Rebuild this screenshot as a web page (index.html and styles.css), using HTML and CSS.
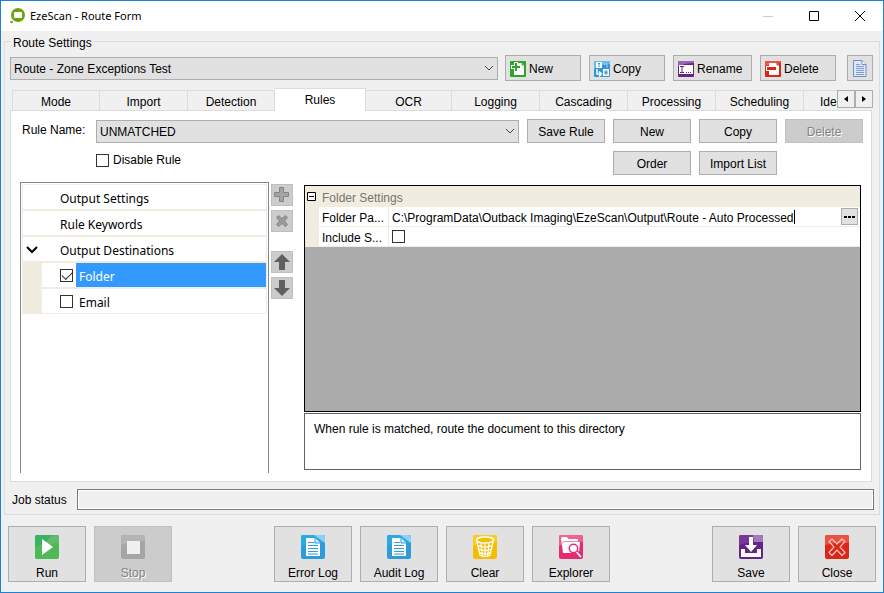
FILE: index.html
```html
<!DOCTYPE html>
<html lang="en">
<head>
    <meta charset="UTF-8">
    <meta name="viewport" content="width=device-width, initial-scale=1.0">
    <title>EzeScan - Route Form</title>
    <link rel="stylesheet" href="styles.css">
</head>
<body>
    <div class="window">
        <header class="titlebar">
            <svg class="app-icon" width="16" height="16" viewBox="0 0 16 16">
                <circle cx="8" cy="7" r="7" fill="#6fa30c"/>
                <rect x="4" y="4" width="8" height="6" rx="1" fill="#fff"/>
                <path d="M0 10.500l3.500 3.500" stroke="#fff" stroke-width="1.500"/>
                <circle cx="1.500" cy="14" r="1.300" fill="#6fa30c"/>
            </svg>
            <h1>EzeScan - Route Form</h1>
            <div class="window-controls">
                <button type="button" aria-label="Minimize" disabled>
                    <svg width="12" height="12" viewBox="0 0 12 12"><path d="M1 6.500h10" stroke="#ccc"/></svg>
                </button>
                <button type="button" aria-label="Maximize">
                    <svg width="12" height="12" viewBox="0 0 12 12"><path d="M1.500 1.500h9v9h-9z" fill="none" stroke="#000"/></svg>
                </button>
                <button type="button" aria-label="Close window">
                    <svg width="12" height="12" viewBox="0 0 12 12"><path d="M1 1l10 10M11 1L1 11" stroke="#000"/></svg>
                </button>
            </div>
        </header>

        <section class="route" aria-labelledby="route-title">
            <h2 id="route-title">Route Settings</h2>

            <div class="route-bar">
                <div class="combo">
                    <select aria-label="Route"><option>Route - Zone Exceptions Test</option></select>
                    <svg class="chevron" width="10" height="6" viewBox="0 0 10 6"><path d="M1 1l4 4 4-4" fill="none" stroke="#444"/></svg>
                </div>
                <div class="route-buttons">
                    <button type="button" class="btn btn-icon">
                        <svg width="16" height="16" viewBox="0 0 16 16">
                            <rect width="16" height="16" rx="1" fill="#2ea526"/>
                            <path d="M5 2h7l2 2v10H4V9z" fill="#fff"/>
                            <path d="M12 1v3h3" fill="none" stroke="#2ea526"/>
                            <path d="M6 1v10M1 6h10" stroke="#fff" stroke-width="4"/>
                            <path d="M6 2v8M2 6h8" stroke="#2ea526" stroke-width="2"/>
                        </svg>
                        New
                    </button>
                    <button type="button" class="btn btn-icon">
                        <svg width="16" height="16" viewBox="0 0 16 16">
                            <rect width="16" height="16" rx="1" fill="#3295d6"/>
                            <path d="M0 0h16v3Q9 3 0 8z" fill="#65bbe9"/>
                            <path d="M2 1h6v6H2zM9 8h6v7H9z" fill="#fff"/>
                            <path d="M4 2.500h2M5 2v4M11 10h2v3h-2zM11 11.500h2" fill="none" stroke="#3295d6"/>
                            <path d="M3 8v5h4M5 10.500L7.500 13 5 15.500" fill="none" stroke="#fff" stroke-width="1.500"/>
                            <path d="M10 3h3v4" fill="none" stroke="#9ed3f2"/>
                        </svg>
                        Copy
                    </button>
                    <button type="button" class="btn btn-icon">
                        <svg width="16" height="16" viewBox="0 0 16 16">
                            <rect width="16" height="16" rx="1" fill="#652386"/>
                            <path d="M0 0h16v2Q8 2 0 5z" fill="#9468ac"/>
                            <rect x="1" y="4" width="14" height="9" fill="#fff"/>
                            <path d="M2 5.500h4M4 5.500v6M2 11.500h4M8 11.500h1M10 11.500h1M12 11.500h1" stroke="#652386"/>
                        </svg>
                        Rename
                    </button>
                    <button type="button" class="btn btn-icon">
                        <svg width="16" height="16" viewBox="0 0 16 16">
                            <rect width="16" height="16" rx="1" fill="#dc2418"/>
                            <path d="M0 0h16v2Q8 2 0 5z" fill="#ea5549"/>
                            <path d="M4 2h8l2 2v10H4z" fill="#fff"/>
                            <path d="M12 1v3h3" fill="none" stroke="#dc2418"/>
                            <rect x="1" y="5" width="11" height="5" fill="#fff"/>
                            <rect x="2" y="6" width="9" height="3" fill="#dc2418"/>
                        </svg>
                        Delete
                    </button>
                </div>
                <button type="button" class="btn btn-square" aria-label="View route document">
                    <svg width="14" height="17" viewBox="0 0 14 17">
                        <path d="M.5.5h8.500l4 4v12H.5z" fill="#dce8fa" stroke="#6f8fc7"/>
                        <path d="M9 .5v4h4" fill="#fff" stroke="#6f8fc7"/>
                        <path d="M3 4.500h4M3 6.500h8M3 8.500h8M3 10.500h8M3 12.500h8M3 14.500h8" stroke="#7f9fd3"/>
                    </svg>
                </button>
            </div>

            <div class="tab-strip">
                <div class="tabs" role="tablist">
                    <button type="button" class="tab" role="tab">Mode</button>
                    <button type="button" class="tab" role="tab">Import</button>
                    <button type="button" class="tab" role="tab">Detection</button>
                    <button type="button" class="tab active" role="tab" aria-selected="true">Rules</button>
                    <button type="button" class="tab" role="tab">OCR</button>
                    <button type="button" class="tab" role="tab">Logging</button>
                    <button type="button" class="tab" role="tab">Cascading</button>
                    <button type="button" class="tab" role="tab">Processing</button>
                    <button type="button" class="tab" role="tab">Scheduling</button>
                    <button type="button" class="tab cut" role="tab">Ide</button>
                </div>
                <div class="tab-scroll">
                    <button type="button" aria-label="Scroll tabs left">
                        <svg width="4" height="6" viewBox="0 0 4 6"><path d="M4 0v6L0 3z"/></svg>
                    </button>
                    <button type="button" aria-label="Scroll tabs right">
                        <svg width="4" height="6" viewBox="0 0 4 6"><path d="M0 0v6l4-3z"/></svg>
                    </button>
                </div>
            </div>

            <div class="panel" role="tabpanel">
                <div class="rule-form">
                    <label class="rule-label" for="rule-name">Rule Name:</label>
                    <div class="combo">
                        <select id="rule-name"><option>UNMATCHED</option></select>
                        <svg class="chevron" width="10" height="6" viewBox="0 0 10 6"><path d="M1 1l4 4 4-4" fill="none" stroke="#444"/></svg>
                    </div>
                    <div class="rule-buttons">
                        <button type="button" class="btn">Save Rule</button>
                        <button type="button" class="btn">New</button>
                        <button type="button" class="btn">Copy</button>
                        <button type="button" class="btn" disabled>Delete</button>
                    </div>
                    <label class="check disable-rule"><input type="checkbox">Disable Rule</label>
                    <div class="rule-buttons second">
                        <button type="button" class="btn">Order</button>
                        <button type="button" class="btn">Import List</button>
                    </div>
                </div>

                <div class="rule-body">
                    <div class="tree-box">
                        <ul class="tree">
                            <li class="node">Output Settings</li>
                            <li class="node">Rule Keywords</li>
                            <li class="node">
                                <svg class="expander" width="12" height="8" viewBox="0 0 12 8"><path d="M1 1l5 5 5-5" fill="none" stroke="#000" stroke-width="2"/></svg>
                                Output Destinations
                            </li>
                            <li class="node child selected">
                                <input type="checkbox" id="dest-folder" checked>
                                <label for="dest-folder">Folder</label>
                            </li>
                            <li class="node child">
                                <input type="checkbox" id="dest-email">
                                <label for="dest-email">Email</label>
                            </li>
                        </ul>
                    </div>

                    <div class="tools">
                        <button type="button" class="tool" aria-label="Add" disabled>
                            <svg width="16" height="16" viewBox="0 0 16 16"><path d="M5.500.5h4v5h5v4h-5v5h-4v-5h-5v-4h5z" fill="#a3a3a3" stroke="#858585"/></svg>
                        </button>
                        <button type="button" class="tool" aria-label="Remove" disabled>
                            <svg width="16" height="16" viewBox="0 0 16 16"><path d="M2.500 4.500l2-2L8 5.500l3.500-3 2 2-3 3.500 3 3.500-2 2L8 10.500l-3.500 3-2-2 3-3.500z" fill="#9a9a9a" stroke="#858585"/></svg>
                        </button>
                        <button type="button" class="tool move" aria-label="Move up">
                            <svg width="16" height="16" viewBox="0 0 16 16"><path d="M8 0l8 8h-5v8H5V8H0z" fill="#606060"/></svg>
                        </button>
                        <button type="button" class="tool" aria-label="Move down">
                            <svg width="16" height="16" viewBox="0 0 16 16"><path d="M8 16L0 8h5V0h6v8h5z" fill="#606060"/></svg>
                        </button>
                    </div>

                    <div class="props">
                        <div class="grid-box">
                            <table class="grid">
                                <colgroup>
                                    <col class="col-gutter">
                                    <col class="col-name">
                                    <col>
                                </colgroup>
                                <tr>
                                    <th class="gutter">
                                        <svg width="9" height="9" viewBox="0 0 9 9"><path d="M.5.5h8v8h-8z" fill="#fff" stroke="#000"/><path d="M2 4.500h5" stroke="#000"/></svg>
                                    </th>
                                    <th colspan="2">Folder Settings</th>
                                </tr>
                                <tr>
                                    <td class="gutter"></td>
                                    <td class="name"><label for="folder-path">Folder Pa...</label></td>
                                    <td class="value">
                                        <div class="editor">
                                            <input type="text" id="folder-path" value="C:\ProgramData\Outback Imaging\EzeScan\Output\Route - Auto Processed">
                                            <span class="caret"></span>
                                            <button type="button" class="browse" aria-label="Browse">
                                                <svg width="11" height="2" viewBox="0 0 11 2"><path d="M0 0h3v2H0zM4 0h3v2H4zM8 0h3v2H8z"/></svg>
                                            </button>
                                        </div>
                                    </td>
                                </tr>
                                <tr>
                                    <td class="gutter"></td>
                                    <td class="name"><label for="include-sub">Include S...</label></td>
                                    <td class="value"><div class="editor"><input type="checkbox" id="include-sub"></div></td>
                                </tr>
                            </table>
                        </div>
                        <p class="hint">When rule is matched, route the document to this directory</p>
                    </div>
                </div>
            </div>

            <div class="status">
                <label for="job-status">Job status</label>
                <input type="text" id="job-status" readonly>
            </div>
        </section>

        <footer class="actions">
            <div class="action-group">
                <button type="button" class="btn action">
                    <svg width="24" height="24" viewBox="0 0 24 24">
                        <rect width="24" height="24" rx="2" fill="#4fb857"/>
                        <path d="M2 0h20q2 0 2 2v5Q12 7 0 12V2q0-2 2-2z" fill="#3bb362"/>
                        <path d="M24 4v4q-6 0-12 2V6q3-6 10-6 2 0 2 2z" fill="#62bb6c"/>
                        <path d="M7 4l11 8-11 8z" fill="#fff"/>
                    </svg>
                    Run
                </button>
                <button type="button" class="btn action" disabled>
                    <svg width="24" height="24" viewBox="0 0 24 24">
                        <rect width="24" height="24" rx="2" fill="#a5a5a5"/>
                        <path d="M2 0h20q2 0 2 2v4Q12 6 0 10V2q0-2 2-2z" fill="#b4b4b4"/>
                        <rect x="6" y="6" width="13" height="13" fill="#f0f0f0"/>
                    </svg>
                    Stop
                </button>
            </div>
            <div class="action-group">
                <button type="button" class="btn action">
                    <svg width="24" height="24" viewBox="0 0 24 24">
                        <rect width="24" height="24" rx="2" fill="#2e9bda"/>
                        <path d="M2 0h20q2 0 2 2v6Q12 6 0 11V2q0-2 2-2z" fill="#29abe2"/>
                        <path d="M13 0h9q2 0 2 2v6z" fill="#8fd0f4"/>
                        <path d="M5 3h9l5 5v13H5z" fill="#fff"/>
                        <path d="M14 3v5h5" fill="#d5edfa" stroke="#2e9bda"/>
                        <path d="M7 7.500h6M7 10.500h10M7 13.500h10M7 16.500h10M7 19h10" stroke="#2e9bda"/>
                    </svg>
                    Error Log
                </button>
                <button type="button" class="btn action">
                    <svg width="24" height="24" viewBox="0 0 24 24">
                        <rect width="24" height="24" rx="2" fill="#2e9bda"/>
                        <path d="M2 0h20q2 0 2 2v6Q12 6 0 11V2q0-2 2-2z" fill="#29abe2"/>
                        <path d="M13 0h9q2 0 2 2v6z" fill="#8fd0f4"/>
                        <path d="M5 3h9l5 5v13H5z" fill="#fff"/>
                        <path d="M14 3v5h5" fill="#d5edfa" stroke="#2e9bda"/>
                        <path d="M7 7.500h6M7 10.500h10M7 13.500h10M7 16.500h10M7 19h10" stroke="#2e9bda"/>
                    </svg>
                    Audit Log
                </button>
                <button type="button" class="btn action">
                    <svg width="24" height="24" viewBox="0 0 24 24">
                        <rect width="24" height="24" rx="2" fill="#f5bd0a"/>
                        <path d="M2 0h20q2 0 2 2v5Q12 6 0 11V2q0-2 2-2z" fill="#fbcb26"/>
                        <ellipse cx="12" cy="5" rx="8.500" ry="3" fill="#f5bd0a" stroke="#fff" stroke-width="1.500"/>
                        <path d="M4 7l3 13q5 3 10 0l3-13M4.500 10.500q7.500 3 15 0M5.500 14q6.500 3 13 0M6.500 17.500q5.500 3 11 0M8 8.500l1.500 13M12 9v13M16 8.500l-1.500 13" fill="none" stroke="#fff" stroke-width="1.200"/>
                    </svg>
                    Clear
                </button>
                <button type="button" class="btn action">
                    <svg width="24" height="24" viewBox="0 0 24 24">
                        <rect width="24" height="24" rx="2" fill="#e72b70"/>
                        <path d="M2 0h20q2 0 2 2v5Q12 6 0 11V2q0-2 2-2z" fill="#ef648e"/>
                        <path d="M2 3l1-1h5l1 2h10v3h2l-1 11H4z" fill="#fff"/>
                        <path d="M3 8l2-1.500h14" fill="none" stroke="#ef8bab"/>
                        <path d="M17 16l5 6" stroke="#e72b70" stroke-width="4"/>
                        <circle cx="14.500" cy="13.500" r="4.200" fill="#fff" stroke="#e72b70" stroke-width="1.500"/>
                        <path d="M17.500 17l4.500 5" stroke="#fff" stroke-width="1.800"/>
                    </svg>
                    Explorer
                </button>
            </div>
            <div class="action-group">
                <button type="button" class="btn action">
                    <svg width="24" height="24" viewBox="0 0 24 24">
                        <rect width="24" height="24" rx="2" fill="#652386"/>
                        <path d="M2 0h20q2 0 2 2v5Q12 6 0 10V2q0-2 2-2z" fill="#76399a"/>
                        <path d="M14 0h8q2 0 2 2v5h-9z" fill="#a07bb8"/>
                        <path d="M2 14h4v4h12v-4h4v8H2z" fill="#fff"/>
                        <path d="M10 2h4v8h4l-6 7-6-7h4z" fill="#fff"/>
                    </svg>
                    Save
                </button>
                <button type="button" class="btn action">
                    <svg width="24" height="24" viewBox="0 0 24 24">
                        <rect width="24" height="24" rx="2" fill="#dd2617"/>
                        <path d="M2 0h20q2 0 2 2v6Q12 7 0 10V2q0-2 2-2z" fill="#ea5244"/>
                        <path d="M4 6.500L7 4l5 5 5-5 3 2.500-5 5.500 5 5.500-3 3-5-5.500-5 5.500-3-3L9 12z" fill="none" stroke="#fbc5bd" stroke-width="1.200" stroke-linejoin="round"/>
                    </svg>
                    Close
                </button>
            </div>
        </footer>
    </div>
</body>
</html>
```
FILE: styles.css
```css
* {
    margin: 0;
    padding: 0;
    box-sizing: border-box;
}

body {
    font-family: "Liberation Sans", Arial, sans-serif;
    font-size: 12px;
    line-height: 16px;
    color: #000;
    background: #f0f0f0;
}

button,
select,
input {
    font: inherit;
    color: inherit;
    border-radius: 0;
}

svg {
    display: block;
    flex: none;
}

.window {
    min-height: 100vh;
    display: flex;
    flex-direction: column;
    border: 1px solid #1883d7;
    background: #f0f0f0;
}

/* Title bar */
.titlebar {
    height: 30px;
    display: flex;
    align-items: center;
    padding-left: 9px;
    gap: 4px;
    background: #fff;
}

.titlebar h1 {
    flex: 1;
    font-family: "Noto Sans", "Segoe UI", sans-serif;
    font-size: 11px;
    font-weight: normal;
}

.window-controls {
    display: flex;
}

.window-controls button {
    width: 46px;
    height: 28px;
    display: flex;
    align-items: center;
    justify-content: center;
    border: 0;
    background: none;
}

/* Shared controls */
.btn {
    height: 24px;
    padding-top: 1px;
    border: 1px solid #adadad;
    background: #e1e1e1;
    text-align: center;
    white-space: nowrap;
}

.btn:disabled {
    border-color: #bfbfbf;
    background: #ccc;
    color: #838383;
    text-shadow: 1px 1px #fff;
}

.combo {
    flex: 1;
    display: grid;
    align-items: center;
}

.combo select {
    grid-area: 1 / 1;
    width: 100%;
    height: 23px;
    padding: 2px 3px 0;
    border: 1px solid #adadad;
    background: #e1e1e1;
    appearance: none;
}

.chevron {
    grid-area: 1 / 1;
    justify-self: end;
    margin-right: 4px;
    pointer-events: none;
}

input[type="checkbox"] {
    appearance: none;
    flex: none;
    width: 13px;
    height: 13px;
    border: 1px solid #333;
    background: #fff;
}

input[type="checkbox"]:checked::before {
    content: "";
    display: block;
    width: 10px;
    height: 5px;
    margin: 1px 0 0 1px;
    border: solid #333;
    border-width: 0 0 1px 1px;
    transform: rotate(-45deg);
}

/* Route settings group */
.route {
    flex: 1;
    min-width: 0;
    display: flex;
    flex-direction: column;
    margin: 10px 3px 0;
    padding: 0 5px 4px;
    border: 1px solid #dcdcdc;
}

.route h2 {
    align-self: flex-start;
    margin: -7px 0 4px 1px;
    padding: 0 2px;
    font-size: 12px;
    font-weight: normal;
    background: #f0f0f0;
}

.route-bar {
    display: flex;
    align-items: center;
    padding-right: 1px;
}

.route-buttons {
    display: flex;
    gap: 8px;
    margin: 0 11px 0 7px;
}

.btn-icon {
    width: 76px;
    height: 26px;
    display: flex;
    align-items: center;
    gap: 3px;
    padding-left: 4px;
}

.btn-icon:nth-child(3) {
    width: 79px;
}

.btn-square {
    width: 26px;
    height: 26px;
    display: flex;
    align-items: center;
    justify-content: center;
}

/* Tabs: the active one overlaps the panel's top border */
.tab-strip {
    position: relative;
    z-index: 1;
    display: flex;
    margin: 7px 1px -1px 2px;
}

.tabs {
    flex: 1;
    min-width: 0;
    display: flex;
    align-items: flex-end;
    overflow: hidden;
}

.tab {
    flex: none;
    width: 88px;
    height: 20px;
    margin-bottom: 1px;
    padding-top: 2px;
    border: solid #dcdcdc;
    border-width: 1px 1px 0 0;
    background: #f0f0f0;
}

.tab:first-child {
    border-left-width: 1px;
}

.tab:nth-child(3) {
    width: 87px;
}

.tab:nth-child(5) {
    width: 86px;
}

.tab.active {
    width: 91px;
    height: 23px;
    margin-bottom: 0;
    padding: 0 0 1px;
    background: #fff;
}

.tab.cut {
    padding-left: 16px;
    text-align: left;
}

.tab-scroll {
    display: flex;
    margin-top: 2px;
}

.tab-scroll button {
    width: 18px;
    height: 18px;
    display: flex;
    align-items: center;
    justify-content: center;
    border: 1px solid #adadad;
    background: #f0f0f0;
}

.panel {
    flex: 1;
    display: flex;
    flex-direction: column;
    gap: 7px;
    margin-right: 2px;
    padding: 8px 9px;
    border: 1px solid #dcdcdc;
    background: #fff;
}

.rule-form {
    display: grid;
    grid-template-columns: 66px 1fr auto;
    column-gap: 8px;
    row-gap: 8px;
    padding-left: 2px;
    margin-right: -1px;
}

.rule-label {
    padding-top: 3px;
    white-space: nowrap;
}

.rule-buttons {
    display: flex;
    gap: 8px;
}

.rule-buttons .btn {
    width: 78px;
}

.rule-buttons.second {
    grid-column: 3;
    padding-left: 86px;
}

.check {
    display: flex;
    align-items: center;
    gap: 4px;
}

.disable-rule {
    grid-column: 2;
    height: 18px;
}

.rule-body {
    flex: 1;
    display: flex;
}

/* Rule tree */
.tree-box {
    flex: 0 0 249px;
    padding: 1px;
    border: solid #828790;
    border-width: 1px 1px 0;
}

.tree {
    list-style: none;
    font-family: "Noto Sans", "Segoe UI", sans-serif;
    background: #f0ede0;
    padding: 1px;
}

.node {
    height: 26px;
    display: flex;
    align-items: center;
    padding: 4px 0 0 37px;
    border-bottom: 2px solid #f0ede0;
    background: #fff;
}

.node:last-child {
    height: 24px;
    border-bottom: 0;
}

.expander {
    margin: -2px 22px 0 -34px;
}

.node.child {
    margin-left: 19px;
    padding: 0 0 0 18px;
    gap: 3px;
}

.node.child label {
    flex: 1;
    align-self: stretch;
    display: flex;
    align-items: center;
    padding: 4px 0 0 3px;
}

.node.selected label {
    background: #3399ff;
    color: #fff;
}

.tools {
    display: flex;
    flex-direction: column;
    gap: 4px;
    padding: 2px 11px 0 2px;
}

.tool {
    width: 22px;
    height: 22px;
    display: flex;
    align-items: center;
    justify-content: center;
    border: 1px solid #bfbfbf;
    background: #ccc;
}

.tool.move {
    margin-top: 15px;
}

/* Property grid */
.props {
    flex: 1;
    min-width: 0;
    display: flex;
    flex-direction: column;
    gap: 1px;
    padding: 3px 1px 3px 0;
}

.grid-box {
    flex: 1;
    border: 1px solid #000;
    background: #ababab;
}

.grid {
    width: 100%;
    table-layout: fixed;
    border-collapse: separate;
    border-spacing: 0;
    background: #f0ede0;
}

.col-gutter {
    width: 14px;
}

.col-name {
    width: 70px;
}

.grid th {
    height: 21px;
    padding: 3px 3px 0;
    font-weight: normal;
    text-align: left;
    color: #77746a;
}

.grid td {
    height: 20px;
    border-bottom: 1px solid #f0ede0;
}

.grid .gutter {
    padding: 0 2px;
}

.grid .name {
    padding: 2px 0 0 3px;
    border-right: 1px solid #f0ede0;
    background: #fff;
    white-space: nowrap;
}

.grid .value {
    padding: 0 2px 0 3px;
    background: #fff;
}

.editor {
    display: flex;
    align-items: center;
}

.editor input[type="text"] {
    field-sizing: content;
    min-width: 0;
    padding-top: 2px;
    border: 0;
    outline: 0;
}

.caret {
    width: 1px;
    height: 14px;
    background: #000;
}

.browse {
    flex: none;
    width: 17px;
    height: 17px;
    display: flex;
    align-items: center;
    justify-content: center;
    margin-left: auto;
    border: 1px solid #adadad;
    background: #e1e1e1;
}

.hint {
    height: 57px;
    padding: 7px 9px;
    border: 1px solid #646464;
}

.status {
    display: flex;
    align-items: center;
    gap: 10px;
    margin-top: 7px;
    padding-left: 2px;
}

.status input {
    flex: 1;
    min-width: 0;
    height: 21px;
    border: 1px solid #7a7a7a;
    background: #f0f0f0;
    box-shadow: inset 0 0 0 1px #fff;
}

/* Bottom actions */
.actions {
    display: flex;
    justify-content: space-between;
    padding: 11px 7px 10px;
}

.action-group {
    display: flex;
    gap: 8px;
}

.action {
    width: 78px;
    height: 56px;
    display: flex;
    flex-direction: column;
    align-items: center;
    justify-content: flex-end;
    gap: 6px;
}
```
